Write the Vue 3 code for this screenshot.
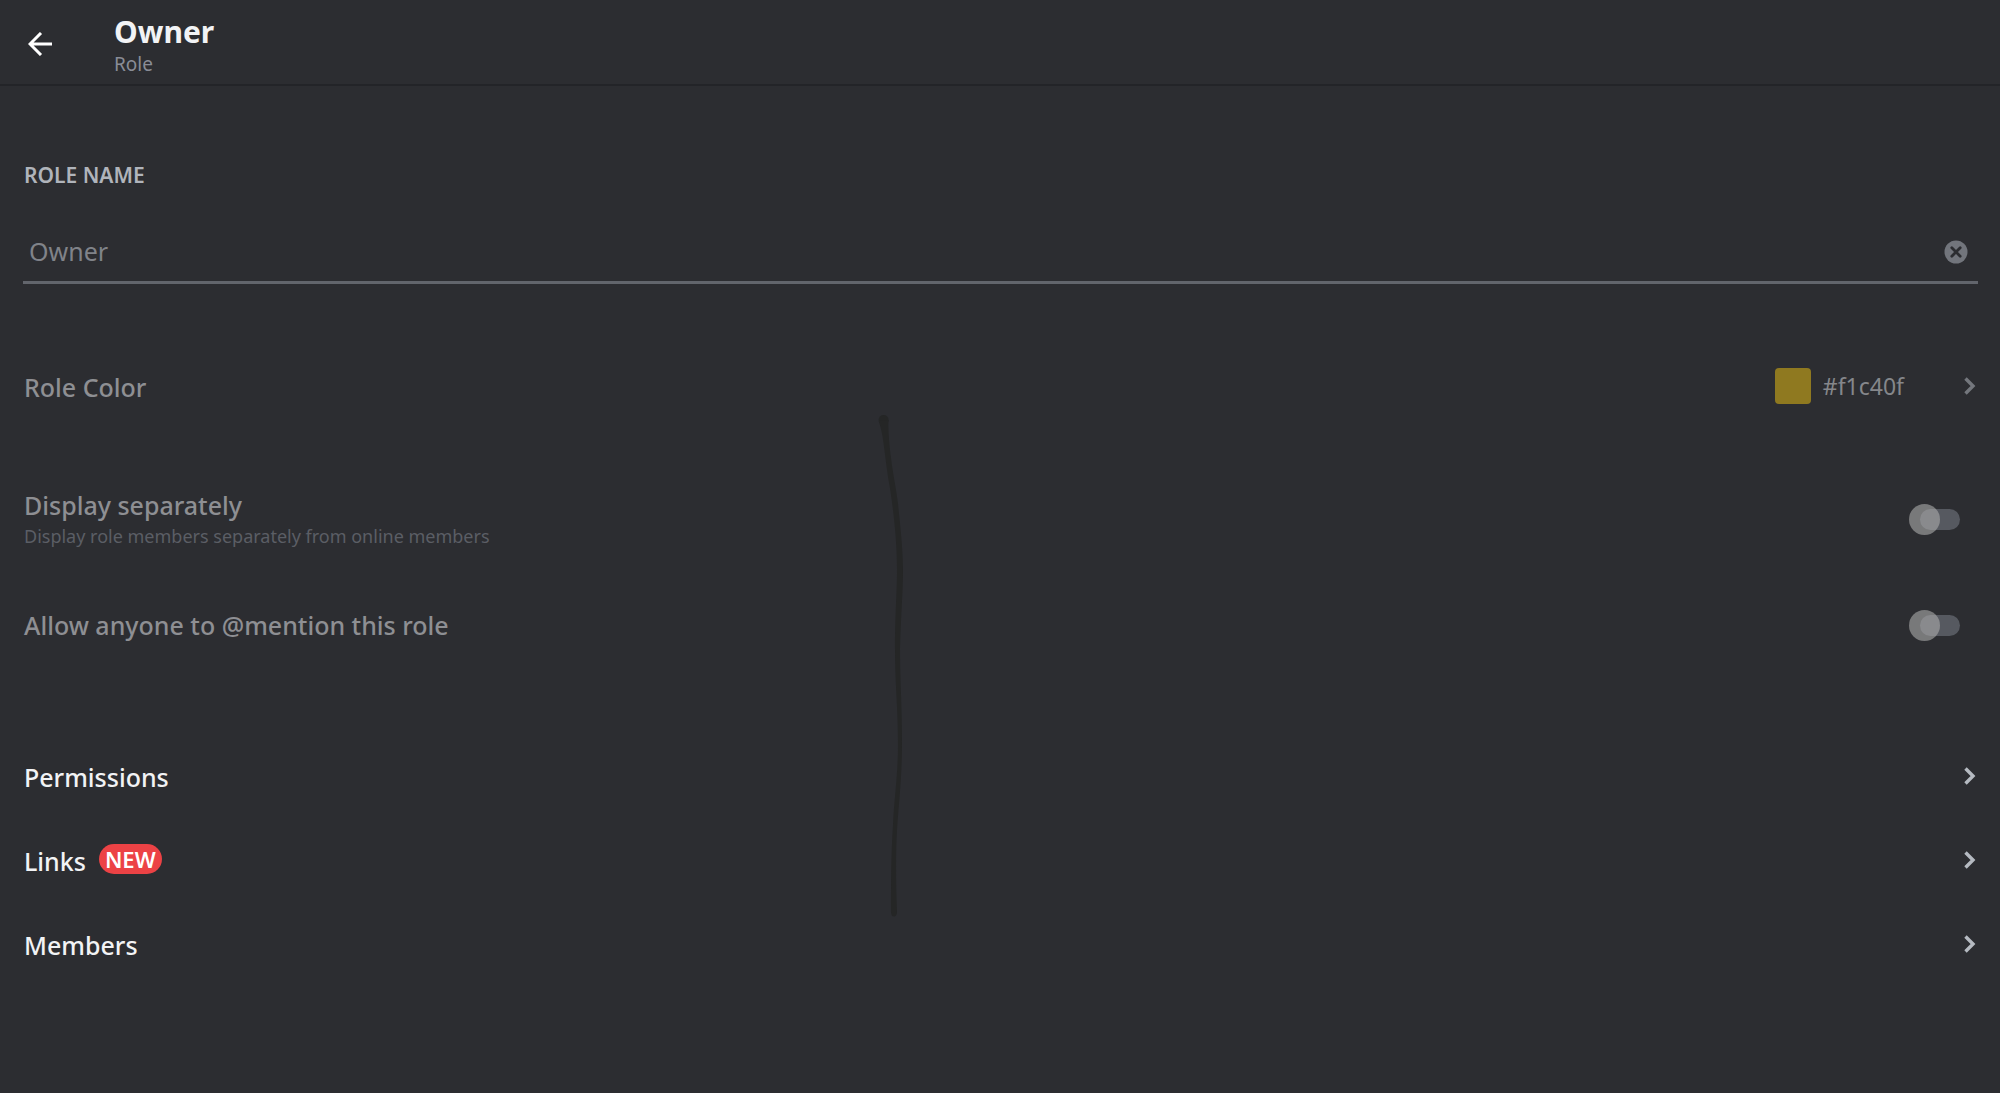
<script setup>
import { ref } from 'vue'

const roleName = ref('Owner')
const roleColor = '#f1c40f'

const toggles = ref([
  {
    id: 'hoist',
    title: 'Display separately',
    hint: 'Display role members separately from online members',
    on: false,
  },
  { id: 'mention', title: 'Allow anyone to @mention this role', hint: '', on: false },
])

const links = [
  { title: 'Permissions', badge: '' },
  { title: 'Links', badge: 'NEW' },
  { title: 'Members', badge: '' },
]
</script>

<template>
  <div class="screen">
    <header class="topbar">
      <button class="back" type="button" aria-label="Back">
        <svg width="24" height="24" viewBox="0 0 24 24" fill="none" stroke="currentColor" stroke-width="3">
          <path d="M24 12H2M13 1 2 12l11 11" />
        </svg>
      </button>
      <div class="heading">
        <h1>Owner</h1>
        <p>Role</p>
      </div>
    </header>

    <main>
      <section class="name">
        <label for="role-name">ROLE NAME</label>
        <div class="field">
          <input id="role-name" v-model="roleName" type="text" disabled />
          <button class="clear" type="button" aria-label="Clear" disabled>
            <svg width="24" height="24" viewBox="0 0 24 24">
              <circle cx="12" cy="12" r="11.5" fill="#72757c" />
              <path d="M7.8 7.8l8.4 8.4M16.2 7.8l-8.4 8.4" stroke="#2c2d31" stroke-width="2.8" stroke-linecap="round" />
            </svg>
          </button>
        </div>
      </section>

      <button class="row color-row" type="button" disabled>
        <span class="title">Role Color</span>
        <span class="swatch"></span>
        <span class="hex">{{ roleColor }}</span>
        <svg class="chevron" width="12" height="18" viewBox="0 0 12 18" fill="none" stroke="currentColor" stroke-width="3.4">
          <path d="M1.5 1.5 9 9l-7.5 7.5" />
        </svg>
      </button>

      <section class="toggles">
        <div v-for="t in toggles" :key="t.id" class="toggle-row">
          <label :for="t.id">
            <span class="title">{{ t.title }}</span>
            <span v-if="t.hint" class="hint">{{ t.hint }}</span>
          </label>
          <input :id="t.id" v-model="t.on" class="switch" type="checkbox" role="switch" disabled />
        </div>
      </section>

      <nav class="links">
        <button v-for="l in links" :key="l.title" class="row" type="button">
          <span class="title">{{ l.title }}</span>
          <span v-if="l.badge" class="badge">{{ l.badge }}</span>
          <svg class="chevron" width="12" height="18" viewBox="0 0 12 18" fill="none" stroke="currentColor" stroke-width="3.4">
            <path d="M1.5 1.5 9 9l-7.5 7.5" />
          </svg>
        </button>
      </nav>
    </main>

    <svg class="pen-mark" width="26" height="504" viewBox="878 414 26 504" aria-hidden="true">
      <circle cx="883.6" cy="420" r="5" />
      <path
        d="M878.800 421L888.500 420C888 430 889 443 891 458C893 475 896 487 898 504C900 524 903 548 903 571C903 590 901 614 900 649C900 680 902 706 902 741C902 778 899 800 897 830C895.500 855 896 886 897 912C897 918 891 918 891 912C891 886 891 855 893 825C894 800 898 775 898 745C898 706 895 685 895 649C895 614 897 594 897 569C897 539 893 508 890 488C887 473 885 452 882.500 436Q881 428 878.800 421Z"
      />
    </svg>
  </div>
</template>

<style>
body {
  margin: 0;
  background: #2c2d31;
}
</style>

<style scoped>
.screen {
  position: relative;
  min-height: 100vh;
  background: #2c2d31;
  color: #f2f3f5;
  font-family: "Noto Sans", sans-serif;
}
button,
input {
  margin: 0;
  padding: 0;
  border: 0;
  background: none;
  color: inherit;
  font: inherit;
}
h1,
p {
  margin: 0;
}
svg {
  display: block;
  flex: none;
}
.topbar {
  display: flex;
  align-items: center;
  height: 84px;
  padding: 0 28px;
  border-bottom: 2px solid #232428;
}
.back {
  padding-top: 4px;
  color: #fff;
}
.heading {
  margin-left: 62px;
  padding-top: 6px;
}
h1 {
  font-size: 30px;
  line-height: 38px;
  font-weight: 700;
}
.heading p {
  font-size: 19px;
  line-height: 26px;
  color: #898c96;
}
.name {
  padding: 73px 22px 0 23px;
}
.name label {
  display: block;
  padding-left: 1px;
  font-size: 21px;
  line-height: 32px;
  font-weight: 600;
  color: #b0b4bb;
}
.field {
  display: flex;
  align-items: center;
  height: 60px;
  margin-top: 30px;
  padding: 0 10px 0 6px;
  border-bottom: 3px solid #62656c;
}
.field input {
  flex: 1;
  min-width: 0;
  height: 40px;
  font-size: 25px;
  color: #808389;
}
.clear {
  padding-top: 2px;
}
.row {
  display: flex;
  align-items: center;
  width: 100%;
  height: 84px;
  padding: 0 24px;
  text-align: left;
}
.title {
  font-size: 25px;
  line-height: 32px;
  font-weight: 500;
}
.row .title {
  padding-top: 2px;
}
.chevron {
  margin-left: auto;
  color: #b5bac1;
}
.color-row {
  margin-top: 60px;
  color: #8e8f93;
}
.swatch {
  width: 36px;
  height: 36px;
  margin-left: auto;
  border-radius: 4px;
  background: #8f7920;
}
.hex {
  margin: 0 60px 0 12px;
  font-size: 23px;
  line-height: 32px;
  color: #85878b;
}
.color-row .chevron {
  margin-left: 0;
  color: #74777d;
}
.toggles {
  padding: 38px 40px 0 24px;
}
.toggle-row {
  display: flex;
  align-items: center;
  justify-content: space-between;
  height: 106px;
}
.toggle-row label {
  display: flex;
  flex-direction: column;
}
.toggle-row .title {
  color: #8e8f93;
}
.hint {
  margin-top: 2px;
  font-size: 18px;
  line-height: 26px;
  color: #5b5e65;
}
.switch {
  position: relative;
  appearance: none;
  flex: none;
  width: 40px;
  height: 21px;
  border-radius: 11px;
  background: #565960;
}
.switch::before {
  content: "";
  position: absolute;
  top: -5px;
  left: -11px;
  width: 31px;
  height: 31px;
  border-radius: 50%;
  background: rgba(172, 172, 172, 0.6);
}
.links {
  margin-top: 56px;
}
.badge {
  margin: 0 0 2px 13px;
  padding: 0 6px;
  border-radius: 15px;
  background: #ec4245;
  color: #fff;
  font-size: 22px;
  line-height: 30px;
  font-weight: 600;
}
.pen-mark {
  position: absolute;
  top: 414px;
  left: 43.9%;
  fill: #252626;
  pointer-events: none;
}
</style>
